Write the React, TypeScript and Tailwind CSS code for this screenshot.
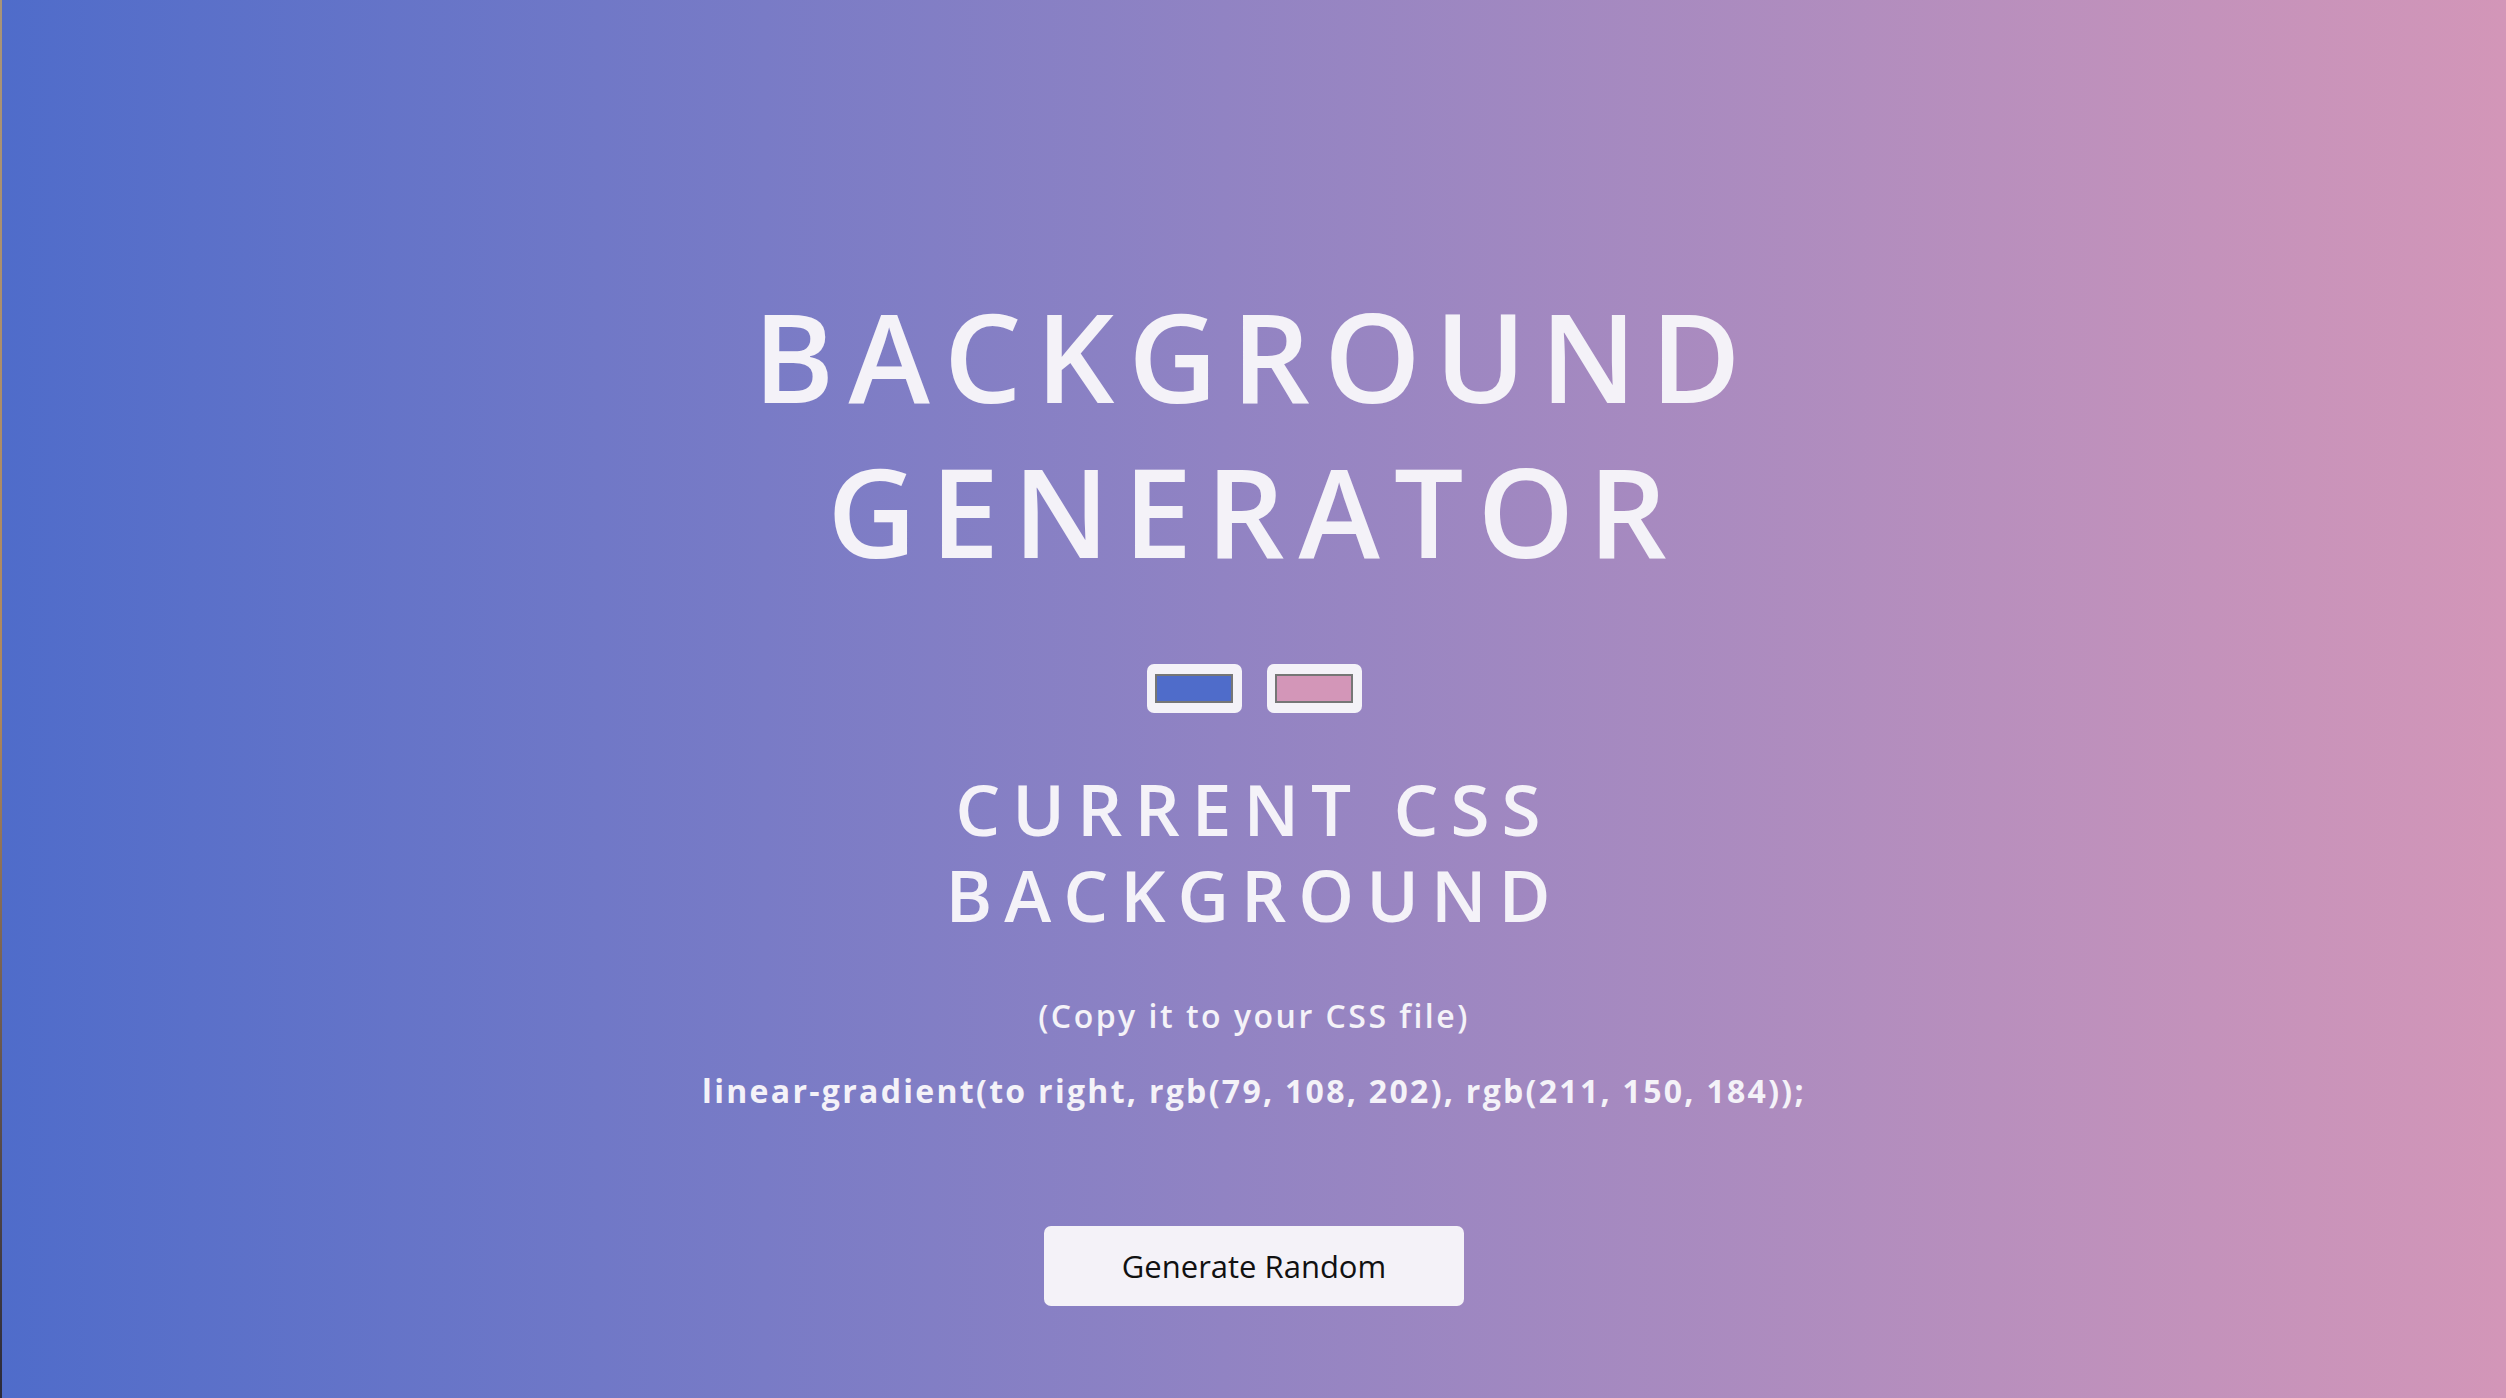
export default function App() {
  return (
    <div className="flex h-[1398px] w-full overflow-hidden">
      <div className="w-[2px] shrink-0 bg-gradient-to-b from-[#a89478] via-[#b0885c] to-[#2a2a3a]" />
      <div
        className="flex flex-1 flex-col items-center bg-gradient-to-r from-[rgb(79,108,202)] to-[rgb(211,150,184)] text-[#f4f2f8]"
        style={{ fontFamily: '"Open Sans", "Noto Sans", sans-serif' }}
      >
        <h1 className="mt-[278px] text-center text-[123px] font-semibold leading-[155px] tracking-[14px]">
          BACKGROUND
          <br />
          GENERATOR
        </h1>
        <div className="mt-[76px] flex gap-[25px]">
          <div className="flex h-[49px] w-[95px] items-center justify-center rounded-[7px] bg-[#f4f2f8]">
            <div className="h-[29px] w-[78px] border-2 border-[#767676] bg-[rgb(79,108,202)]" />
          </div>
          <div className="flex h-[49px] w-[95px] items-center justify-center rounded-[7px] bg-[#f4f2f8]">
            <div className="h-[29px] w-[78px] border-2 border-[#767676] bg-[rgb(211,150,184)]" />
          </div>
        </div>
        <h3 className="mt-[53px] text-center text-[71px] font-semibold leading-[86px] tracking-[12px]">
          CURRENT CSS
          <br />
          BACKGROUND
        </h3>
        <p className="mt-[56px] text-center text-[32px] font-semibold leading-[44px] tracking-[2.5px]">
          (Copy it to your CSS file)
        </p>
        <p className="mt-[31px] text-center text-[32px] font-bold leading-[44px] tracking-[2.3px]">
          linear-gradient(to right, rgb(79, 108, 202), rgb(211, 150, 184));
        </p>
        <button className="mt-[113px] h-[80px] w-[420px] rounded-[7px] bg-[#f4f2f8] text-[31px] text-[#111]">
          Generate Random
        </button>
      </div>
    </div>
  );
}
